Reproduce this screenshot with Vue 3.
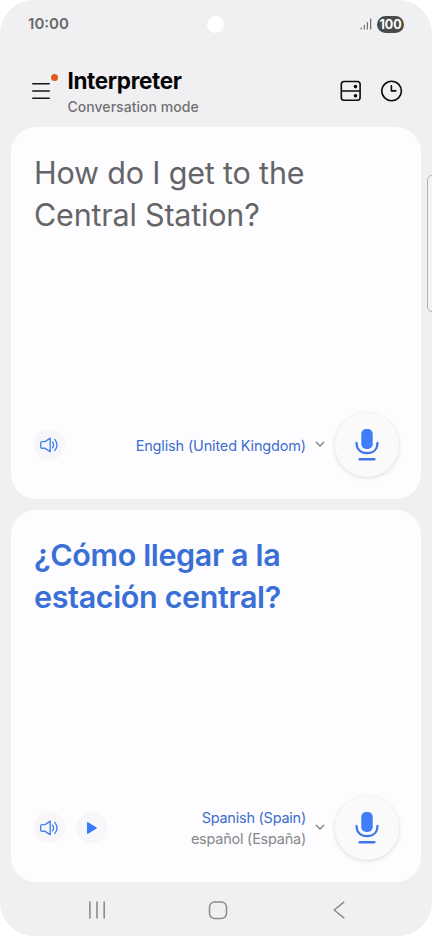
<script setup>
const panels = [
  {
    id: 'source',
    lines: [
      { text: 'How do I get to the', cls: 'q1' },
      { text: 'Central Station?', cls: 'q2' },
    ],
    language: 'English (United Kingdom)',
    native: '',
    playable: false,
  },
  {
    id: 'target',
    lines: [
      { text: '¿Cómo llegar a la', cls: 'a1' },
      { text: 'estación central?', cls: 'a2' },
    ],
    language: 'Spanish (Spain)',
    native: 'español (España)',
    playable: true,
  },
]
</script>

<template>
  <div class="phone">
    <div class="status">
      <span class="time">10:00</span>
      <span class="camera"></span>
      <div class="indicators">
        <svg class="signal" width="13" height="13" viewBox="0 0 13 13" fill="none" stroke="#69696b" stroke-width="1.1">
          <path d="M1.2 10.4V12.5M4.3 7.8V12.5M7.4 5V12.5" />
          <path d="M10.7 1.5V12.5" stroke="#555557" />
        </svg>
        <span class="battery">100</span>
      </div>
    </div>

    <header class="header">
      <button class="menu" aria-label="Menu">
        <svg width="18" height="18" viewBox="0 0 18 18" fill="none" stroke="#161618" stroke-width="1.6" stroke-linecap="round">
          <path d="M0.8 1.7H17.2M0.8 9H17.2M0.8 16.3H17.2" />
        </svg>
        <i class="dot"></i>
      </button>
      <div class="titles">
        <h1>Interpreter</h1>
        <p>Conversation mode</p>
      </div>
      <div class="actions">
        <svg width="22" height="22" viewBox="0 0 22 22" fill="none" stroke="#0c0c0e" stroke-width="1.6">
          <rect x="1.3" y="1.5" width="18.8" height="18.8" rx="2.8" />
          <path d="M1.5 11H20" />
          <circle cx="15.5" cy="6.6" r="1.8" fill="#0c0c0e" stroke="none" />
          <circle cx="15.5" cy="15.7" r="1.8" fill="#0c0c0e" stroke="none" />
        </svg>
        <svg width="22" height="22" viewBox="0 0 22 22" fill="none" stroke="#0c0c0e" stroke-width="1.6" stroke-linecap="round">
          <circle cx="10.6" cy="11" r="9.8" />
          <path d="M10.4 5.8V10.9H14.8" stroke-linejoin="round" />
        </svg>
      </div>
    </header>

    <main class="panels">
      <section v-for="p in panels" :key="p.id" class="card" :class="p.id">
        <p class="phrase">
          <span v-for="l in p.lines" :key="l.cls" :class="l.cls">{{ l.text }}</span>
        </p>
        <div class="controls">
          <button class="round" aria-label="Volume">
            <svg width="20" height="18" viewBox="0 0 20 18" fill="none" stroke="#4a83ec" stroke-width="1.4" stroke-linecap="round" stroke-linejoin="round">
              <path d="M11.2 2.1V15.7L6.1 12.3H3Q1.7 12.3 1.7 11V6.9Q1.7 5.6 3 5.6H6.1L11.2 2.1Z" />
              <path d="M13.5 6.1Q15.6 8.9 13.5 11.8M15.8 3.4Q20.2 8.9 15.8 14.4" />
            </svg>
          </button>
          <button v-if="p.playable" class="round" aria-label="Play">
            <svg width="14" height="14" viewBox="0 0 14 14">
              <path d="M3.7 1.8V12.2L12.2 7Z" fill="#3b7bfa" stroke="#3b7bfa" stroke-width="1.4" stroke-linejoin="round" />
            </svg>
          </button>
          <div class="language">
            <span class="name">{{ p.language }}</span>
            <span v-if="p.native" class="native">{{ p.native }}</span>
          </div>
          <svg class="chevron" width="10" height="7" viewBox="0 0 10 7" fill="none" stroke="#858588" stroke-width="1.4" stroke-linecap="round" stroke-linejoin="round">
            <path d="M1.3 1.3L5 5L8.7 1.3" />
          </svg>
          <button class="mic" aria-label="Speak">
            <svg width="24" height="34" viewBox="0 0 24 34" fill="none" stroke="#4077e8" stroke-width="2.2" stroke-linecap="round">
              <rect x="6.3" y="1" width="11.4" height="20" rx="4.8" fill="#3f7dfb" stroke="none" />
              <path d="M1.5 14.8C1.5 21.5 5.8 25.2 12 25.2S22.5 21.5 22.5 14.8" />
              <path d="M4.7 31.2H19.3" stroke-width="2.4" />
            </svg>
          </button>
        </div>
      </section>
    </main>

    <nav class="nav">
      <svg width="18" height="18" viewBox="0 0 18 18" stroke="#8b8b8e" stroke-width="1.6" stroke-linecap="round">
        <path d="M1.9 1V17M9 1V17M16.2 1V17" />
      </svg>
      <svg width="20" height="20" viewBox="0 0 20 20" fill="none" stroke="#8b8b8e" stroke-width="1.5">
        <rect x="1.5" y="1.9" width="17" height="16.6" rx="5.2" />
      </svg>
      <svg class="back" width="12" height="18" viewBox="0 0 12 18" fill="none" stroke="#8b8b8e" stroke-width="1.5" stroke-linecap="round" stroke-linejoin="round">
        <path d="M10.8 1.2L1.2 9L10.8 16.8" />
      </svg>
    </nav>

    <div class="edge"></div>
  </div>
</template>

<style>
body {
  background: #fff;
}
</style>

<style scoped>
.phone,
.phone * {
  box-sizing: border-box;
}
.phone {
  position: relative;
  display: flex;
  flex-direction: column;
  width: 432px;
  height: 936px;
  overflow: hidden;
  border-radius: 34px;
  background: #f0f0f2;
  font-family: Inter, sans-serif;
}
button {
  display: flex;
  align-items: center;
  justify-content: center;
  padding: 0;
  border: 0;
  background: none;
}
h1,
p {
  margin: 0;
}
svg {
  display: block;
  flex: none;
}
.status {
  display: grid;
  flex: none;
  grid-template-columns: 1fr 17px 1fr;
  align-items: center;
  height: 48px;
  padding: 0 28px 0 27.6px;
}
.time {
  padding: 0 0 2px 0.5px;
  color: #69696b;
  font-size: 15px;
  font-weight: 600;
}
.camera {
  width: 17px;
  height: 17px;
  border-radius: 50%;
  background: #fff;
}
.indicators {
  display: flex;
  align-items: center;
  justify-content: flex-end;
  gap: 4px;
}
.signal {
  margin-top: -1px;
}
.battery {
  width: 27px;
  height: 17px;
  border-radius: 9px;
  background: #4b4b4d;
  color: #fff;
  font-size: 12.5px;
  font-weight: 700;
  line-height: 17px;
  text-align: center;
}
.header {
  display: flex;
  flex: none;
  height: 79px;
  padding: 0 29px 0 32px;
}
.menu {
  position: relative;
  width: 18px;
  height: 18px;
  margin-top: 34px;
}
.dot {
  position: absolute;
  top: -8px;
  left: 19px;
  width: 7px;
  height: 7px;
  border-radius: 50%;
  background: #de5c20;
}
.titles {
  flex: 1;
  padding: 19px 0 0 17.5px;
  white-space: nowrap;
}
h1 {
  color: #060608;
  font-size: 22.5px;
  font-weight: 700;
  letter-spacing: -0.35px;
  line-height: 28px;
}
.titles p {
  margin-top: 1px;
  color: #717174;
  font-size: 14px;
  font-weight: 500;
  letter-spacing: 0.04px;
  line-height: 22px;
}
.actions {
  display: flex;
  gap: 19px;
  padding-top: 32px;
}
.panels {
  display: flex;
  flex: none;
  flex-direction: column;
  gap: 11.5px;
  padding: 0 11px;
}
.card {
  display: flex;
  flex-direction: column;
  justify-content: space-between;
  height: 371.5px;
  padding: 25px 22px 21.5px 23px;
  border-radius: 25px;
  background: #fdfdff;
}
.card.target {
  height: 372px;
  padding: 24px 22px 22px 23px;
}
.phrase {
  color: #656568;
  font-size: 30.5px;
  line-height: 42px;
  white-space: nowrap;
}
.phrase span {
  display: block;
  width: max-content;
}
.q1 {
  letter-spacing: -0.17px;
}
.q2 {
  letter-spacing: -0.2px;
}
.target .phrase {
  color: #3a70d5;
  font-weight: 600;
  letter-spacing: -0.36px;
}
.controls {
  display: flex;
  align-items: center;
  height: 65px;
}
.round {
  width: 31px;
  height: 31px;
  margin-right: 11.5px;
  margin-left: -0.5px;
  border-radius: 50%;
  background: #f7f7f9;
}
.language {
  display: flex;
  flex: 1;
  flex-direction: column;
  align-items: flex-end;
  font-size: 14.5px;
  letter-spacing: -0.16px;
  line-height: 21px;
  white-space: nowrap;
}
.source .language {
  padding-top: 1px;
}
.target .language {
  letter-spacing: -0.24px;
}
.name {
  color: #3d6dcd;
}
.native {
  color: #88888b;
}
.chevron {
  margin: 0 10px 0 9px;
}
.mic {
  width: 64px;
  height: 64px;
  border-radius: 50%;
  background: #fafafa;
  box-shadow: 0 1px 4px rgba(0, 0, 0, 0.14);
}
.nav {
  display: flex;
  flex: none;
  align-items: center;
  gap: 102px;
  height: 56px;
  padding-left: 88px;
}
.back {
  margin-left: 3px;
}
.edge {
  position: absolute;
  top: 175px;
  right: -8px;
  width: 13px;
  height: 137px;
  border: 1px solid #b0b0b2;
  border-radius: 5px;
  background: #f3f3f5;
}
</style>
